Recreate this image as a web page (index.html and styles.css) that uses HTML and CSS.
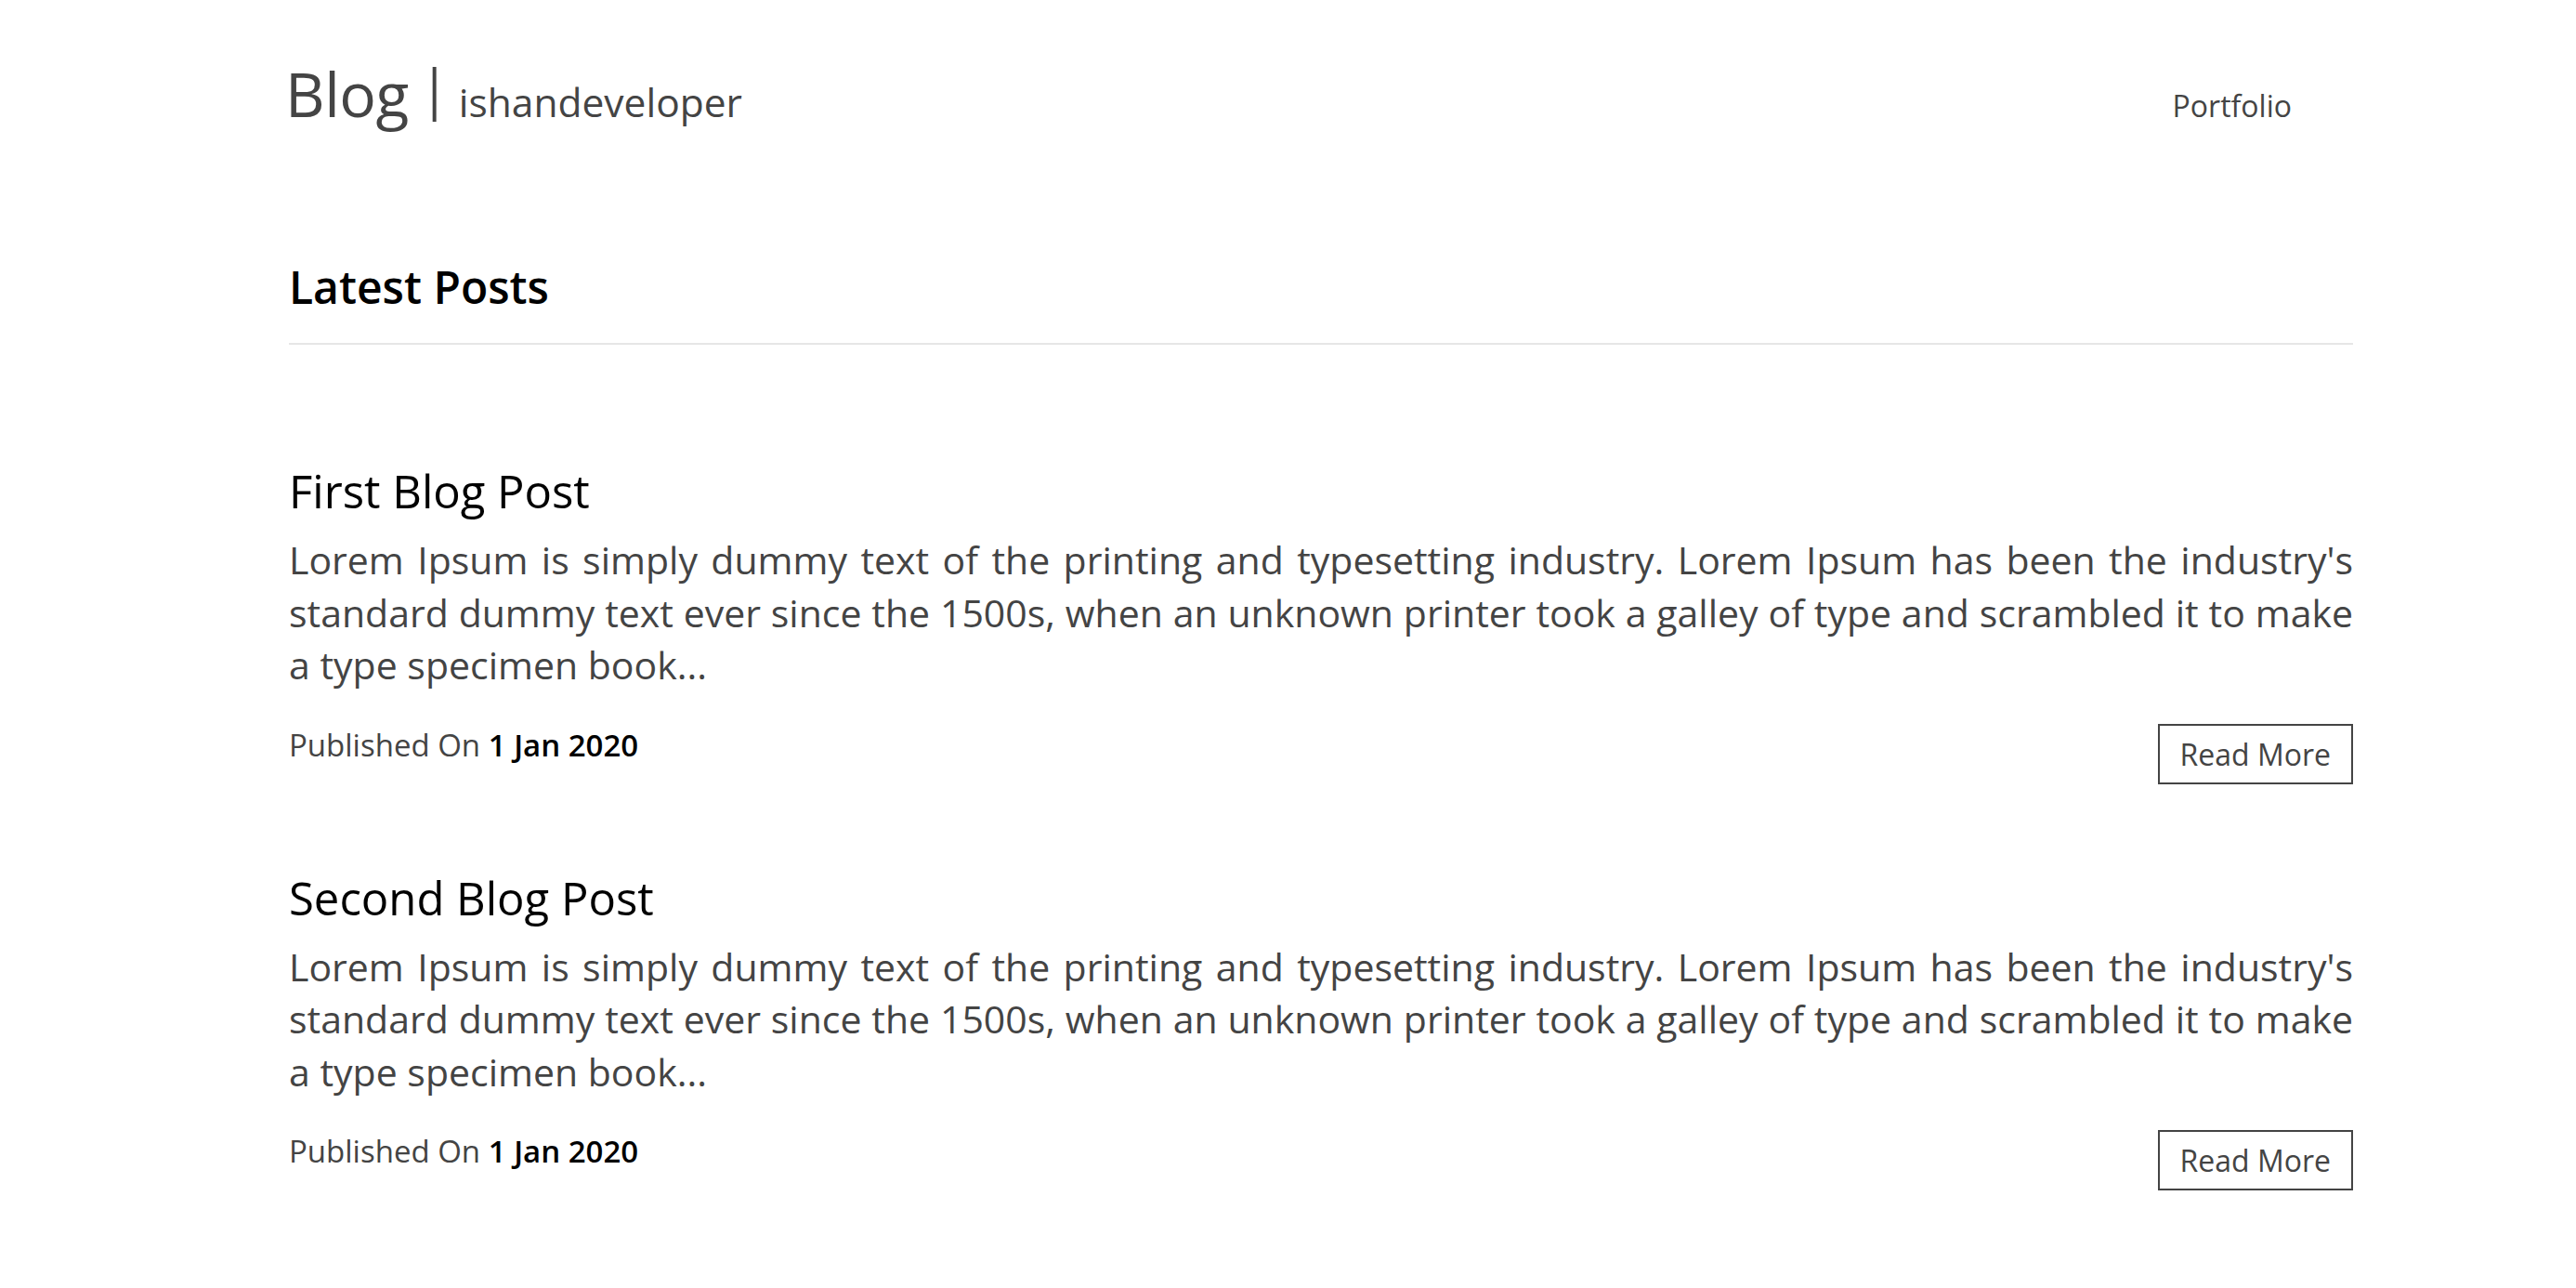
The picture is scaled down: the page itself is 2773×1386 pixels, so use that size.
FILE: index.html
```html
<!DOCTYPE html>
<html lang="en">
<head>
<meta charset="utf-8">
<title>Blog | ishandeveloper</title>
<link rel="stylesheet" href="styles.css">
</head>
<body>
<div class="page">
  <header class="site-header">
    <h1 class="brand"><span class="brand-main">Blog</span><span class="brand-bar">|</span><span class="brand-sub">ishandeveloper</span></h1>
    <nav class="nav"><a class="nav-link" href="#">Portfolio</a></nav>
  </header>

  <main>
    <h2 class="section-title">Latest Posts</h2>

    <article class="post">
      <h3 class="post-title">First Blog Post</h3>
      <p class="post-excerpt">Lorem Ipsum is simply dummy text of the printing and typesetting industry. Lorem Ipsum has been the industry's standard dummy text ever since the 1500s, when an unknown printer took a galley of type and scrambled it to make a type specimen book...</p>
      <div class="post-footer">
        <p class="post-date">Published On <strong>1 Jan 2020</strong></p>
        <a class="read-more" href="#">Read More</a>
      </div>
    </article>

    <article class="post">
      <h3 class="post-title">Second Blog Post</h3>
      <p class="post-excerpt">Lorem Ipsum is simply dummy text of the printing and typesetting industry. Lorem Ipsum has been the industry's standard dummy text ever since the 1500s, when an unknown printer took a galley of type and scrambled it to make a type specimen book...</p>
      <div class="post-footer">
        <p class="post-date">Published On <strong>1 Jan 2020</strong></p>
        <a class="read-more" href="#">Read More</a>
      </div>
    </article>
  </main>
</div>
</body>
</html>
```

FILE: styles.css
```css
* {
  box-sizing: border-box;
}

html, body {
  margin: 0;
  padding: 0;
  background: #ffffff;
}

body {
  font-family: "Open Sans", "Noto Sans", "DejaVu Sans", sans-serif;
  color: #444444;
}

a {
  text-decoration: none;
  color: inherit;
}

.page {
  padding: 0 240px 0 311px;
}

.site-header {
  display: flex;
  justify-content: space-between;
  align-items: baseline;
  padding-top: 60px;
}

.brand {
  margin: 0 0 0 -4px;
  font-weight: 400;
  font-size: 66px;
  line-height: 80px;
  color: #444444;
  white-space: nowrap;
}

.brand-main {
  letter-spacing: -0.5px;
}

.brand-bar {
  font-size: 58px;
  line-height: 1;
  vertical-align: 9px;
  margin-left: 12px;
}

.brand-sub {
  font-size: 42.5px;
  margin-left: 10px;
}

.nav {
  margin-right: 66px;
}

.nav-link {
  font-size: 32px;
  color: #444444;
}

.section-title {
  margin: 131px 0 0;
  padding-bottom: 32px;
  border-bottom: 2px solid #e6e6e6;
  font-size: 48px;
  line-height: 56px;
  font-weight: 600;
  color: #000000;
}

.post {
  margin-bottom: 94px;
}

.section-title + .post {
  margin-top: 129px;
}

.post-title {
  margin: 0;
  font-size: 49px;
  line-height: 56px;
  font-weight: 400;
  color: #000000;
}

.post-excerpt {
  margin: 18px 0 0;
  font-size: 41px;
  line-height: 56.5px;
  text-align: justify;
  color: #444444;
}

.post-footer {
  display: flex;
  justify-content: space-between;
  align-items: flex-start;
  margin-top: 35px;
}

.post-date {
  margin: 0;
  font-size: 33px;
  line-height: 45px;
  color: #444444;
}

.post-date strong {
  font-weight: 600;
  color: #000000;
}

.read-more {
  display: block;
  border: 2px solid #444444;
  padding: 0 22px;
  font-size: 32px;
  line-height: 61px;
  color: #444444;
}
```
